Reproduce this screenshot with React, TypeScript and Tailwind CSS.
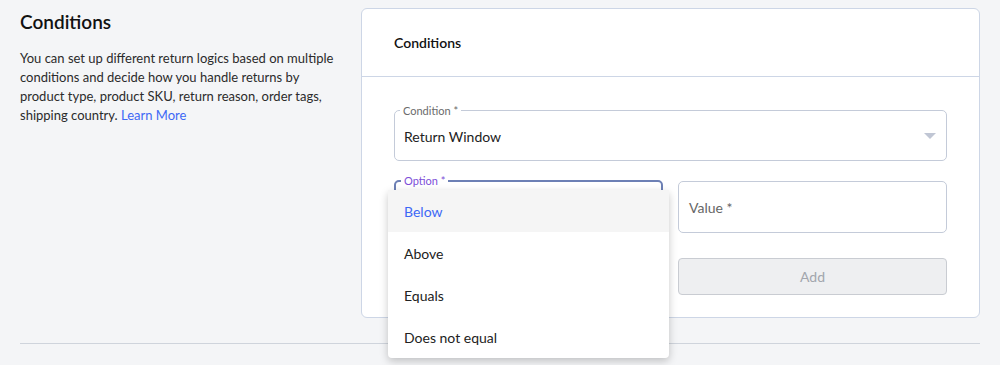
import React from "react";

const font = { fontFamily: "Lato, 'Noto Sans', sans-serif" };

function Outlined({ label, labelClass, borderClass, children, className }: { label: string; labelClass: string; borderClass: string; children?: React.ReactNode; className?: string }) {
  return (
    <fieldset className={`relative rounded-[5px] ${borderClass} ${className ?? ""}`}>
      <legend className={`ml-[5px] px-[3px] text-[11px] leading-[11px] ${labelClass}`}>{label}</legend>
      {children}
    </fieldset>
  );
}

export default function App() {
  return (
    <div className="w-[1000px] h-[365px] bg-[#f4f5f7] overflow-hidden text-[#1f1f1f]" style={font}>
      <div className="flex px-5 pt-2">
        <div className="w-[340px] shrink-0 pt-[1px]">
          <h2 className="text-[19px] leading-[26px] font-semibold text-[#111]">Conditions</h2>
          <p className="mt-[14px] text-[13px] leading-[19px] text-[#2b2b2b] w-[320px]">
            You can set up different return logics based on multiple conditions and decide how you handle returns by product type, product SKU, return reason, order tags, shipping country. <span className="text-[#3d68f5]">Learn More</span>
          </p>
        </div>
        <div className="w-[619px] ml-[1px] h-[310px] bg-white border border-[#cdd6e6] rounded-[6px]">
          <div className="h-[68px] border-b border-[#cdd6e6] px-8 flex items-center">
            <span className="text-[14px] font-semibold text-[#111]">Conditions</span>
          </div>
          <div className="px-8 pt-[28px] flex flex-col">
            <Outlined label="Condition *" labelClass="text-[#6b6b6b]" borderClass="border border-[#c4cbd9] h-[56px]">
              <div className="flex items-center justify-between pl-[9px] pr-[10px] h-[40px]">
                <span className="text-[14px] text-[#222]">Return Window</span>
                <svg width="12" height="6" viewBox="0 0 12 6"><path d="M0 0h12L6 6z" fill="#c0c6d4" /></svg>
              </div>
            </Outlined>
            <div className="flex gap-[15px] mt-[20px]">
              <div className="relative w-[269px]">
                <Outlined label="Option *" labelClass="text-[#7d4fd8]" borderClass="border-2 border-[#6d80b5] h-[58px]" className="-mt-[6px]" />
                <div className="absolute left-[-6px] top-[9px] w-[281px] bg-white rounded-[4px] shadow-[0_3px_8px_rgba(0,0,0,0.22)] z-10 py-0">
                  {["Below", "Above", "Equals", "Does not equal"].map((o, i) => (
                    <div key={o} className={`h-[42px] flex items-center px-4 text-[14px] ${i === 0 ? "bg-[#f5f5f5] text-[#3d68f5]" : "text-[#222]"}`}>{o}</div>
                  ))}
                </div>
              </div>
              <div className="flex flex-col gap-[25px] w-[269px]">
                <div className="h-[52px] border border-[#c4cbd9] rounded-[5px] flex items-center px-[10px]">
                  <span className="text-[14px] text-[#666]">Value *</span>
                </div>
                <div className="h-[37px] border border-[#c9ccd2] bg-[#eeeff1] rounded-[4px] flex items-center justify-center">
                  <span className="text-[14px] text-[#a2a6ad]">Add</span>
                </div>
              </div>
            </div>
          </div>
        </div>
      </div>
      <div className="mx-5 mt-[25px] border-t border-[#cfd4dc]" />
    </div>
  );
}
